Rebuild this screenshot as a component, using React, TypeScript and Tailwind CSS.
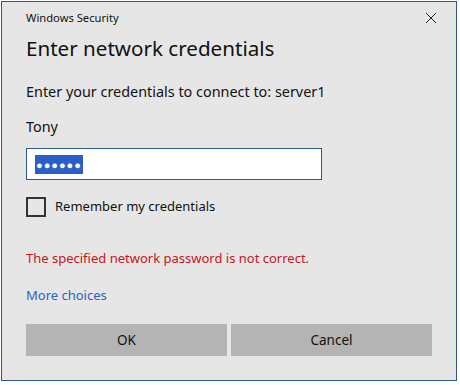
import React from "react";

export default function App() {
  const font = { fontFamily: '"Noto Sans", "Open Sans", sans-serif' };
  return (
    <div className="w-[460px] h-[385px] bg-white pl-px pt-px" style={font}>
      <div className="w-[456px] h-[380px] border border-[#2b5797] bg-[#e6e6e6] flex flex-col pl-[24px] pr-[23px]">
        <div className="flex items-center justify-between h-[32px]">
          <span className="text-[11.2px] text-[#111]">Windows Security</span>
          <svg width="12" height="12" viewBox="0 0 12 12" className="mr-[-4px]">
            <path d="M1 1 L11 11 M11 1 L1 11" stroke="#222" strokeWidth="1" />
          </svg>
        </div>
        <div className="text-[20.6px] leading-[28px] text-[#111]">Enter network credentials</div>
        <div className="text-[14.4px] leading-[20px] text-[#111] mt-[20px]">Enter your credentials to connect to: server1</div>
        <div className="text-[14.4px] leading-[20px] text-[#111] mt-[15px]">Tony</div>
        <div className="mt-[11px] w-[296px] h-[32px] border border-[#2b5797] bg-white flex items-center pl-[8px]">
          <span className="bg-[#2b5ec8] text-white text-[11px] leading-[19px] h-[19px] px-[1px] tracking-[1px] flex items-center">●●●●●●</span>
        </div>
        <div className="flex items-center mt-[17px] gap-[9px] h-[20px]">
          <div className="w-[20px] h-[20px] border-2 border-[#333] bg-[#e6e6e6]"></div>
          <span className="text-[13px] text-[#111]">Remember my credentials</span>
        </div>
        <div className="text-[13px] leading-[20px] text-[#c5161d] mt-[31px]">The specified network password is not correct.</div>
        <div className="text-[13px] leading-[20px] text-[#2b62c4] mt-[17px]">More choices</div>
        <div className="flex gap-[4px] mt-[19px]">
          <button className="w-[201px] h-[32px] bg-[#b4b4b4] text-[13.5px] text-[#111]">OK</button>
          <button className="w-[201px] h-[32px] bg-[#b4b4b4] text-[13.5px] text-[#111]">Cancel</button>
        </div>
      </div>
    </div>
  );
}
